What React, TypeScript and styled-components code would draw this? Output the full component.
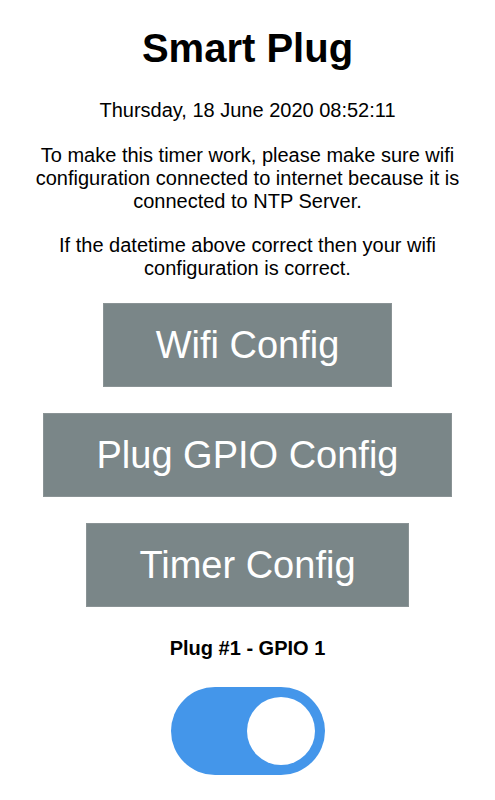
import React from "react";
import styled, { createGlobalStyle } from "styled-components";

const GlobalStyle = createGlobalStyle`
  html, body {
    margin: 0;
    padding: 0;
    background: #ffffff;
  }
  body {
    font-family: "Liberation Sans", Arial, Helvetica, sans-serif;
    color: #000000;
  }
`;

const Page = styled.main`
  display: flex;
  flex-direction: column;
  align-items: center;
  padding: 25px 16px 0;
  text-align: center;
`;

const Title = styled.h1`
  margin: 0;
  font-size: 40px;
  font-weight: 700;
  line-height: 46px;
`;

const Text = styled.p<{ $top: number }>`
  margin: ${(p) => p.$top}px 0 0;
  font-size: 20px;
  line-height: 23px;
`;

const ButtonList = styled.nav`
  display: flex;
  flex-direction: column;
  align-items: center;
  gap: 26px;
  margin-top: 23px;
`;

const ConfigButton = styled.button`
  box-sizing: border-box;
  height: 84px;
  padding: 0 52px;
  border: 1px solid #8a9395;
  background: #7a8688;
  color: #ffffff;
  font-family: "Liberation Sans", Arial, Helvetica, sans-serif;
  font-size: 38px;
  line-height: 44px;
  cursor: pointer;
`;

const PlugLabel = styled.h3`
  margin: 30px 0 0;
  font-size: 20px;
  font-weight: 700;
  line-height: 23px;
`;

const Switch = styled.label<{ $on: boolean }>`
  position: relative;
  display: block;
  width: 154px;
  height: 88px;
  margin-top: 27px;
  border-radius: 44px;
  background: ${(p) => (p.$on ? "#4496ea" : "#cccccc")};
  cursor: pointer;
`;

const Knob = styled.span<{ $on: boolean }>`
  position: absolute;
  top: 10px;
  left: ${(p) => (p.$on ? "76px" : "10px")};
  width: 68px;
  height: 68px;
  border-radius: 50%;
  background: #ffffff;
`;

export default function App() {
  const [on, setOn] = React.useState(true);
  return (
    <>
      <GlobalStyle />
      <Page>
        <Title>Smart Plug</Title>
        <Text $top={28}>Thursday, 18 June 2020 08:52:11</Text>
        <Text $top={22}>
          To make this timer work, please make sure wifi configuration connected
          to internet because it is connected to NTP Server.
        </Text>
        <Text $top={21}>
          If the datetime above correct then your wifi configuration is correct.
        </Text>
        <ButtonList>
          <ConfigButton>Wifi Config</ConfigButton>
          <ConfigButton>Plug GPIO Config</ConfigButton>
          <ConfigButton>Timer Config</ConfigButton>
        </ButtonList>
        <PlugLabel>Plug #1 - GPIO 1</PlugLabel>
        <Switch $on={on} onClick={() => setOn(!on)}>
          <Knob $on={on} />
        </Switch>
      </Page>
    </>
  );
}
